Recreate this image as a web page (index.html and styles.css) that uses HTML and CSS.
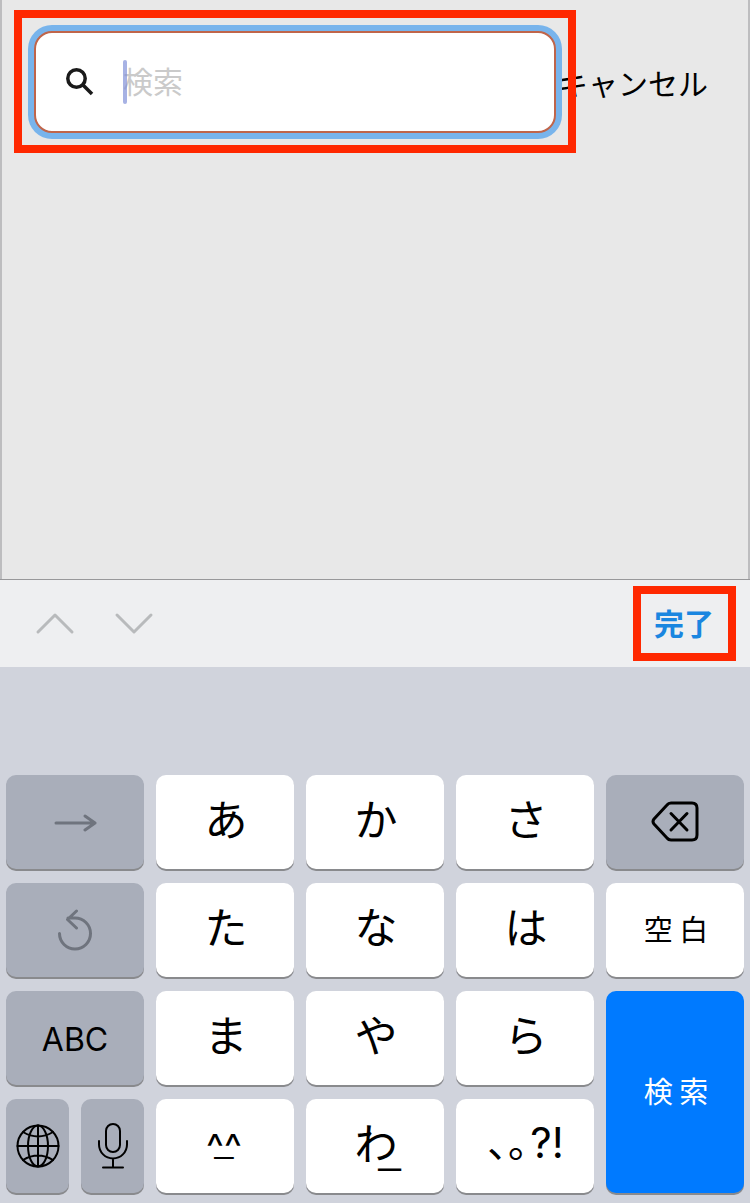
FILE: index.html
```html
<!DOCTYPE html>
<html lang="ja">
<head>
<meta charset="utf-8">
<meta name="viewport" content="width=device-width, initial-scale=1">
<title>検索</title>
<link rel="stylesheet" href="styles.css">
</head>
<body>
<main class="page">
  <form class="search-bar" role="search">
    <div class="highlight search-highlight">
      <label class="search-box">
        <svg class="search-icon" viewBox="0 0 28 28" aria-hidden="true"><circle cx="10.5" cy="10.5" r="8.7"/><path d="M17 17 26 26"/></svg>
        <span class="field">
          <input class="search-input" type="search" placeholder="検索" aria-label="検索">
          <span class="caret"></span>
        </span>
      </label>
    </div>
    <button class="cancel" type="button">キャンセル</button>
  </form>
</main>
<div class="toolbar">
  <div class="arrows">
    <button class="arrow" type="button" aria-label="前へ"><svg viewBox="0 0 40 24"><path d="M3 20 20 3 37 20"/></svg></button>
    <button class="arrow" type="button" aria-label="次へ"><svg viewBox="0 0 40 24"><path d="M3 3 20 20 37 3"/></svg></button>
  </div>
  <div class="highlight"><button class="done" type="button">完了</button></div>
</div>
<section class="keyboard" aria-label="キーボード">
  <button class="key dark dim" type="button" aria-label="次の文字"><svg width="44" height="20" viewBox="0 0 44 20"><path d="M3 11H42M32 4 42 11 32 18"/></svg></button>
  <button class="key" type="button">あ</button>
  <button class="key" type="button">か</button>
  <button class="key" type="button">さ</button>
  <button class="key dark" type="button" aria-label="削除"><svg width="48" height="42" viewBox="0 0 48 42"><path d="M20 2H41Q46 2 46 7V34Q46 39 41 39H20Q17.500 39 16 37L3 23Q1 20.500 3 18L16 4Q17.500 2 20 2Z"/><path d="M20 12.500 36 29M36 12.500 20 29"/></svg></button>

  <button class="key dark dim" type="button" aria-label="戻す"><svg width="36" height="42" viewBox="0 0 36 42"><path d="M2.500 24.500A15.500 15.500 0 1 0 18 9H11M19.500 2 10.500 10.500 19.500 19"/></svg></button>
  <button class="key" type="button">た</button>
  <button class="key" type="button">な</button>
  <button class="key" type="button">は</button>
  <button class="key word" type="button">空 白</button>

  <button class="key dark latin" type="button">ABC</button>
  <button class="key" type="button">ま</button>
  <button class="key" type="button">や</button>
  <button class="key" type="button">ら</button>
  <button class="key word search-key" type="button">検 索</button>

  <div class="pair">
    <button class="key dark" type="button" aria-label="言語"><svg class="thin" width="46" height="46" viewBox="0 0 46 46"><circle cx="23" cy="23" r="20.500"/><ellipse cx="23" cy="23" rx="10" ry="20.500"/><path d="M23 2.500V43.500M2.500 23H43.500M8 9Q23 18 38 9M8 37Q23 28 38 37"/></svg></button>
    <button class="key dark" type="button" aria-label="音声入力"><svg class="thin" width="32" height="48" viewBox="0 0 32 48"><rect x="9" y="2" width="14" height="28" rx="7"/><path d="M2 19V22.500A14 14 0 0 0 30 22.500V19M16 37V45M6 45.500H26"/></svg></button>
  </div>
  <button class="key face" type="button"><span>^^</span><span class="mouth">_</span></button>
  <button class="key" type="button"><span class="wa">わ<span class="low-line">_</span></span></button>
  <button class="key punct" type="button">､｡<span class="marks">?!</span></button>
</section>
</body>
</html>
```
FILE: styles.css
```css
* { box-sizing: border-box; }

body {
  margin: 0;
  min-height: 100vh;
  display: flex;
  flex-direction: column;
  background: #e8e8e8;
  color: #000;
  font-family: "Noto Sans CJK JP", sans-serif;
}

button {
  margin: 0;
  padding: 0;
  border: 0;
  background: none;
  color: inherit;
  font: inherit;
}

svg {
  display: block;
  fill: none;
  stroke: currentColor;
  stroke-width: 3;
  stroke-linecap: round;
  stroke-linejoin: round;
}

.page {
  flex: 1;
  padding: 10px 40px 10px 12px;
  border: solid #bdbdbf;
  border-width: 0 2px;
}

.search-bar { display: flex; align-items: center; }

.highlight { border: 8px solid #ff2800; }

.search-highlight {
  position: relative;
  z-index: 1;
  flex: 1;
  margin-right: -18px;
  padding: 13px 12px 12px;
}

.search-box {
  display: flex;
  align-items: center;
  height: 102px;
  padding: 0 30px;
  gap: 29px;
  background: #fff;
  border: 2px solid #c0654a;
  border-radius: 18px;
  box-shadow: 0 0 0 6px #78b4ec;
}

.search-icon {
  width: 28px;
  height: 28px;
  color: #1a1a1a;
  stroke-width: 3.500;
  stroke-linecap: butt;
}

.field { position: relative; flex: 1; display: flex; }

.search-input {
  width: 100%;
  height: 44px;
  padding: 0 0 4px;
  border: 0;
  outline: 0;
  background: none;
  appearance: none;
  font: 30px/40px "Noto Sans CJK JP", sans-serif;
}

.search-input::placeholder { color: #cacaca; opacity: 1; }

.caret {
  position: absolute;
  left: 0;
  top: 0;
  width: 4px;
  height: 44px;
  border-radius: 2px;
  background: #8090d8b0;
}

.cancel { font-size: 30px; line-height: 44px; white-space: nowrap; }

.toolbar {
  display: flex;
  align-items: center;
  justify-content: space-between;
  height: 88px;
  padding: 0 14px 0 35px;
  border-top: 1px solid #98989a;
  background: #eeeff1;
}

.arrows { display: flex; gap: 39px; color: #b8babc; }
.arrow svg { width: 40px; height: 24px; }

.done {
  display: block;
  padding: 0 14px 3px 13px;
  color: #1a86e0;
  font-size: 30px;
  font-weight: 700;
  line-height: 56px;
}

.keyboard {
  display: grid;
  grid-template-columns: repeat(5, minmax(0, 1fr));
  grid-auto-rows: 94px;
  gap: 14px 12px;
  padding: 108px 6px 10px;
  background: #d0d3dc;
}

.key {
  display: flex;
  align-items: center;
  justify-content: center;
  min-width: 0;
  padding: 0 0 10px 2px;
  border-radius: 10px;
  background: #fff;
  box-shadow: 0 2px 0 #898a8d;
  font-size: 43px;
  line-height: 60px;
}

.dark { padding: 0; background: #a9aeba; }
.dim { color: #6f747e; }
.word { padding-bottom: 4px; font-size: 29px; }

.latin {
  padding-top: 3px;
  font-family: Inter, sans-serif;
  font-size: 32px;
}

.search-key {
  grid-row: span 2;
  background: #007aff;
  color: #fff;
}

.pair { display: grid; grid-template-columns: 1fr 1fr; gap: 12px; }
.thin { stroke-width: 2; }

.face {
  flex-direction: column;
  padding: 0 2px 6px 0;
  font-family: Inter, sans-serif;
  font-size: 38px;
  line-height: 38px;
}

.mouth {
  margin-top: -45px;
  font-family: "Liberation Sans", sans-serif;
  font-size: 34px;
}

.wa { position: relative; }

.low-line {
  position: absolute;
  left: 24px;
  top: 8px;
  font-family: "Liberation Sans", sans-serif;
  font-size: 40px;
}

.punct { padding-bottom: 12px; font-size: 40px; }

.marks {
  padding: 6px 0 0 2px;
  font-family: Inter, sans-serif;
  font-size: 42px;
}
```
